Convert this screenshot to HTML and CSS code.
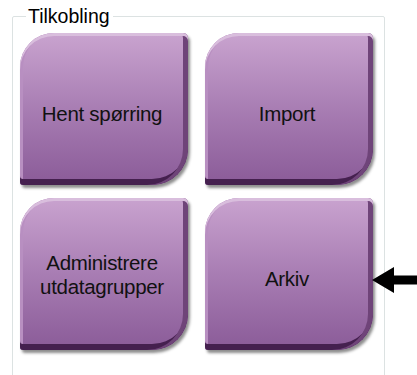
FILE: index.html
```html
<!DOCTYPE html>
<html lang="no">
<head>
  <meta charset="UTF-8" />
  <meta name="viewport" content="width=device-width, initial-scale=1.0" />
  <title>Tilkobling</title>
  <link rel="stylesheet" href="styles.css">
</head>
<body>
  <fieldset class="group">
    <legend>Tilkobling</legend>
    <div class="tiles">
      <button class="tile">Hent spørring</button>
      <button class="tile">Import</button>
      <button class="tile tile-two">Administrere<br>utdatagrupper</button>
      <button class="tile">Arkiv</button>
    </div>
  </fieldset>

  <!-- pekepil mot Arkiv -->
  <svg class="pointer" width="46" height="30" viewBox="0 0 46 30">
    <polygon points="0,15 22,2 22,10.5 46,10.5 46,19.5 22,19.5 22,28" fill="#000" />
  </svg>
</body>
</html>
```

FILE: styles.css
```css
:root {
  --bg-color: #ffffff;
  --line-color: #dce2e2;
  --text-color: #111111;
  --tile-top: #c9a3cf;
  --tile-mid: #a87db3;
  --tile-bottom: #8a5b98;
  --tile-side: #6f4479;
  --tile-edge: #45204f;
}

body {
  background: var(--bg-color);
  color: var(--text-color);
  font-family: "Liberation Sans", Arial, sans-serif;
  margin: 0;
  height: 375px;
  overflow: hidden;
}

.group {
  margin: 5px 0 0 12px;
  width: 373px;
  height: 380px;
  padding: 6px 8px 0 7px;
  border: 1px solid var(--line-color);
  border-radius: 2px;
  box-sizing: border-box;
}

.group legend {
  font-size: 19.5px;
  line-height: 22px;
  padding: 0 3px 0 2px;
  margin-left: 6px;
  color: #000;
}

.tiles {
  display: grid;
  grid-template-columns: 168px 168px;
  grid-auto-rows: 152px;
  column-gap: 17px;
  row-gap: 13px;
}

.tile {
  border: none;
  border-radius: 34px 5px 36px 3px;
  background: linear-gradient(180deg, var(--tile-top) 0%, var(--tile-mid) 50%, var(--tile-bottom) 100%);
  box-shadow:
    inset 0 3px 0 #d9bedd,
    inset -5px 0 0 var(--tile-side),
    inset 0 -6px 0 var(--tile-edge),
    inset 3px 0 0 #b88fc1,
    2px 3px 3px rgba(0, 0, 0, 0.45);
  font-family: "Liberation Sans", Arial, sans-serif;
  font-size: 20.5px;
  line-height: 20px;
  letter-spacing: -0.3px;
  color: var(--text-color);
  padding: 9px 4px 0 0;
  cursor: pointer;
}

.tile-two {
  line-height: 24px;
  padding-top: 2px;
}

.pointer {
  position: absolute;
  left: 372px;
  top: 265px;
}
```
